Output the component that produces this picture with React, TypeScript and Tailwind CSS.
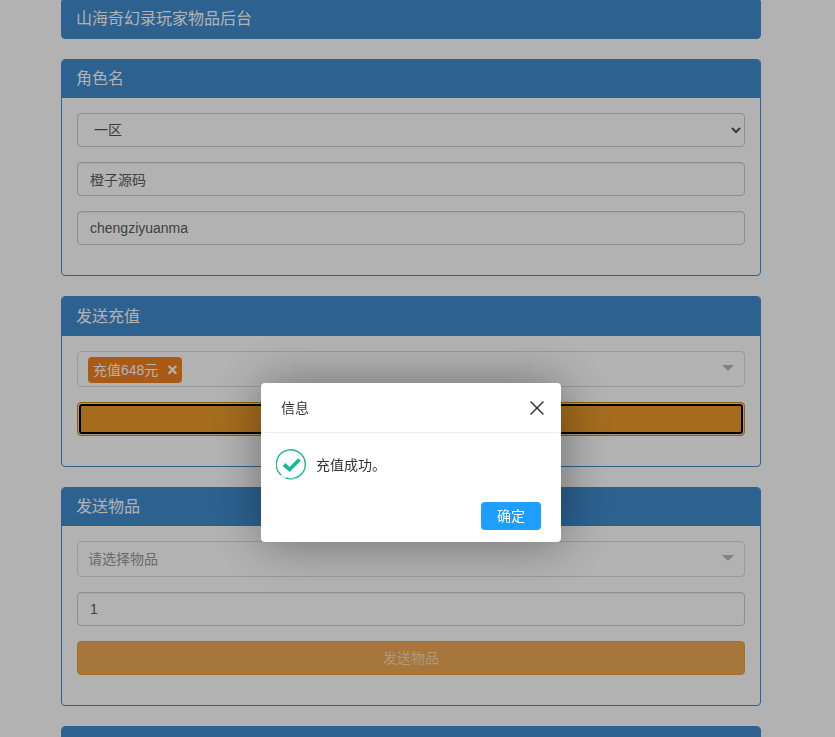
import React from 'react';
import { X } from 'lucide-react';

const FONT = "font-['Liberation_Sans','Noto_Sans_CJK_SC',sans-serif]";

interface PanelProps {
    title?: string;
    headClass?: string;
    children?: React.ReactNode;
}

const Panel: React.FC<PanelProps> = ({ title, headClass = 'h-[38px]', children }) => (
    <section className="rounded border border-[#3f8ccf] bg-white">
        <div className={`flex items-center rounded-t-[3px] bg-[#3f8ccf] px-[15px] text-base text-white ${headClass}`}>
            <span className="-ml-px">{title}</span>
        </div>
        {children && <div className="flex flex-col gap-[15px] px-[15px] pb-[30px] pt-[15px]">{children}</div>}
    </section>
);

const TextField: React.FC<{ value: string }> = ({ value }) => (
    <input
        readOnly
        value={value}
        className="h-[34px] w-full rounded border border-[#ccc] bg-white px-3 text-sm text-[#5c5c5c] shadow-[inset_0_1px_1px_rgba(0,0,0,0.075)]"
    />
);

const Caret = () => <span className="mb-0.5 h-0 w-0 border-x-[6px] border-t-[6px] border-x-transparent border-t-[#bbb]" />;

export default function App() {
    return (
        <div className={`relative h-[737px] w-[835px] overflow-hidden bg-white ${FONT}`}>
            <main className="-mt-0.5 ml-[61px] flex w-[700px] flex-col gap-5">
                <Panel title="山海奇幻录玩家物品后台" headClass="h-[39px]" />

                <Panel title="角色名">
                    <select className="h-[34px] w-full rounded border border-[#ccc] bg-white px-3 text-sm text-[#555]">
                        <option>一区</option>
                    </select>
                    <TextField value="橙子源码" />
                    <TextField value="chengziyuanma" />
                </Panel>

                <Panel title="发送充值" headClass="h-[39px]">
                    <div className="flex h-9 items-center justify-between rounded-sm border border-[#ddd] bg-white pl-2.5 pr-[10px]">
                        <span className="mt-px flex h-[26px] items-center gap-[9px] rounded-sm bg-[#f58220] px-[5px] text-sm text-white">
                            充值648元
                            <span className="w-[10px] text-center text-lg font-bold leading-none">×</span>
                        </span>
                        <Caret />
                    </div>
                    {/* focused button: the black ring sits inside a light gap */}
                    <button className="h-[34px] w-full rounded border border-[#d58512] bg-[#f7dcb4] p-px text-sm text-white">
                        <span className="flex h-full items-center justify-center rounded-[3px] border-2 border-black bg-[#ec9b2b]">
                            发送充值
                        </span>
                    </button>
                </Panel>

                <Panel title="发送物品">
                    <div className="flex h-9 items-center justify-between rounded-sm border border-[#ddd] bg-white pl-2.5 pr-[10px] text-sm text-[#999]">
                        请选择物品
                        <Caret />
                    </div>
                    <TextField value="1" />
                    <button className="h-[34px] w-full rounded border border-[#eea236] bg-[#f0aa53] text-sm text-white/60">
                        发送物品
                    </button>
                </Panel>

                <Panel />
            </main>

            {/* dimmed page behind the dialog */}
            <div className="fixed inset-0 bg-black/30" />

            <div className="fixed left-[261px] top-[383px] flex h-[159px] w-[300px] flex-col rounded-sm bg-white shadow-[1px_1px_50px_rgba(0,0,0,0.4)]">
                <header className="flex h-[50px] items-center justify-between border-b border-[#f0f0f0] pl-5 pr-3 text-sm text-[#333]">
                    信息
                    <X size={24} strokeWidth={1.4} className="text-[#2f2f3a]" />
                </header>
                <div className="flex items-center gap-[9px] pl-[15px] pt-4 text-sm text-[#333]">
                    <svg width="31" height="31" viewBox="0 0 31 31" fill="none">
                        <path d="M5 26A14.5 14.5 0 1 1 10 29" stroke="#16b998" strokeWidth="1.4" />
                        <path d="M5 26Q7.5 28.4 10 29.3M12 30.2Q16 30.6 20 29.4" stroke="#9fe3d5" strokeWidth="1" />
                        <path d="M8 15.5L13.5 20.5L23.5 10.5" stroke="#16b998" strokeWidth="3.8" />
                    </svg>
                    充值成功。
                </div>
                <div className="mt-auto flex justify-end pb-3 pr-5">
                    <button className="h-7 w-[60px] rounded-sm bg-[#1e9fff] text-sm text-white">确定</button>
                </div>
            </div>
        </div>
    );
}
